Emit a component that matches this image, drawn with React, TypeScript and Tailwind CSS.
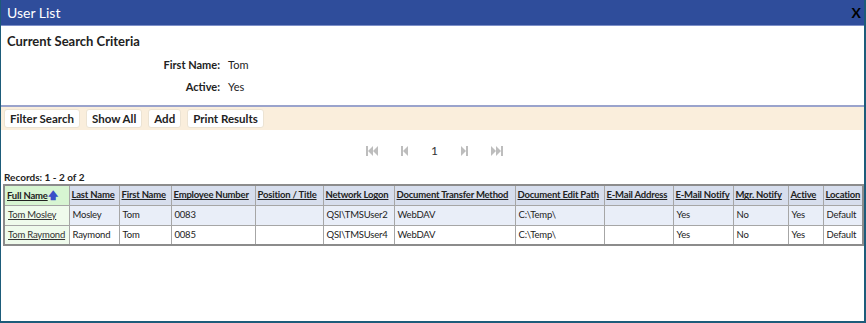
import React from "react";

const cols = [
  { label: "Full Name", w: "w-[65px]" },
  { label: "Last Name", w: "w-[50px]" },
  { label: "First Name", w: "w-[52px]" },
  { label: "Employee Number", w: "w-[84px]" },
  { label: "Position / Title", w: "w-[68px]" },
  { label: "Network Logon", w: "w-[71px]" },
  { label: "Document Transfer Method", w: "w-[121px]" },
  { label: "Document Edit Path", w: "w-[89px]" },
  { label: "E-Mail Address", w: "w-[69px]" },
  { label: "E-Mail Notify", w: "w-[60px]" },
  { label: "Mgr. Notify", w: "w-[55px]" },
  { label: "Active", w: "w-[35px]" },
  { label: "Location", w: "w-[40px]" },
];

const rows = [
  ["Tom Mosley", "Mosley", "Tom", "0083", "", "QSI\\TMSUser2", "WebDAV", "C:\\Temp\\", "", "Yes", "No", "Yes", "Default"],
  ["Tom Raymond", "Raymond", "Tom", "0085", "", "QSI\\TMSUser4", "WebDAV", "C:\\Temp\\", "", "Yes", "No", "Yes", "Default"],
];

const PagerIcon = ({ kind }: { kind: "first" | "prev" | "next" | "last" }) => {
  const flip = kind === "next" || kind === "last";
  const dbl = kind === "first" || kind === "last";
  return (
    <svg width={dbl ? 12 : 7} height="10" viewBox={dbl ? "0 0 12 10" : "0 0 7 10"} className={flip ? "-scale-x-100" : ""}>
      <rect x="0" y="0" width="2" height="10" fill="#bdbdbd" />
      <polygon points="2,5 7,0 7,10" fill="#bdbdbd" />
      {dbl && <polygon points="7,5 12,0 12,10" fill="#bdbdbd" />}
    </svg>
  );
};

const Btn = ({ children }: { children: React.ReactNode }) => (
  <button className="h-[19px] px-[5px] bg-white rounded-[3px] border border-[#ece3d3] text-[11.5px] font-bold text-[#222] leading-none">
    {children}
  </button>
);

export default function App() {
  return (
    <div className="w-[866px] h-[323px] bg-white border-l border-r-2 border-b-2 border-[#1d5c7a] flex flex-col font-['Lato',sans-serif] text-[#222] overflow-hidden">
      <div className="h-[26px] shrink-0 bg-[#2f4d9b] border-b border-[#7d8fc8] flex items-center justify-between pl-[6px] pr-[3px]">
        <span className="text-white text-[14px]">User List</span>
        <span className="text-black font-bold text-[14px]">X</span>
      </div>

      <div className="h-[81px] shrink-0 border-b-2 border-[#9aa3cc] px-[6px] pt-[6px]">
        <div className="text-[13px] font-bold leading-[18px]">Current Search Criteria</div>
        <div className="grid grid-cols-[213px_1fr] gap-x-[8px] gap-y-[6px] mt-[7px] text-[11px] leading-[16px]">
          <span className="text-right font-bold">First Name:</span>
          <span>Tom</span>
          <span className="text-right font-bold">Active:</span>
          <span>Yes</span>
        </div>
      </div>

      <div className="h-[23px] shrink-0 bg-[#faeedc] flex items-center gap-[6px] px-[3px]">
        <Btn>Filter Search</Btn>
        <Btn>Show All</Btn>
        <Btn>Add</Btn>
        <Btn>Print Results</Btn>
      </div>

      <div className="h-[41px] shrink-0 flex items-center justify-center gap-[23px] pl-[4px]">
        <PagerIcon kind="first" />
        <PagerIcon kind="prev" />
        <span className="text-[12px] text-[#333]">1</span>
        <PagerIcon kind="next" />
        <PagerIcon kind="last" />
      </div>

      <div className="px-[2px]">
        <div className="text-[10px] font-bold leading-[12px] pl-[1px]">Records: 1 - 2 of 2</div>
        <table className="table-fixed w-[860px] border-2 border-[#8c8c8c] border-collapse text-[9.5px] mt-[1px] tracking-[-0.2px]">
          <thead>
            <tr className="h-[20px]">
              {cols.map((c, i) => (
                <th
                  key={c.label}
                  className={`${c.w} border border-[#a6a6a6] px-[2px] text-left font-bold whitespace-nowrap overflow-hidden ${i === 0 ? "bg-[#d7f5d2]" : "bg-[#d7deed]"}`}
                >
                  <span className="underline">{c.label}</span>
                  {i === 0 && <span className="text-[#3a4fc8] text-[10px]">🡅</span>}
                </th>
              ))}
            </tr>
          </thead>
          <tbody>
            {rows.map((r, ri) => (
              <tr key={ri} className={`h-[20px] ${ri === 0 ? "bg-[#e9eef8]" : "bg-white"}`}>
                {r.map((v, ci) => (
                  <td
                    key={ci}
                    className={`border border-[#a6a6a6] px-[3px] whitespace-nowrap overflow-hidden ${ci === 0 ? "bg-[#effbec] underline text-[#333]" : ""}`}
                  >
                    {v}
                  </td>
                ))}
              </tr>
            ))}
          </tbody>
        </table>
      </div>
    </div>
  );
}
